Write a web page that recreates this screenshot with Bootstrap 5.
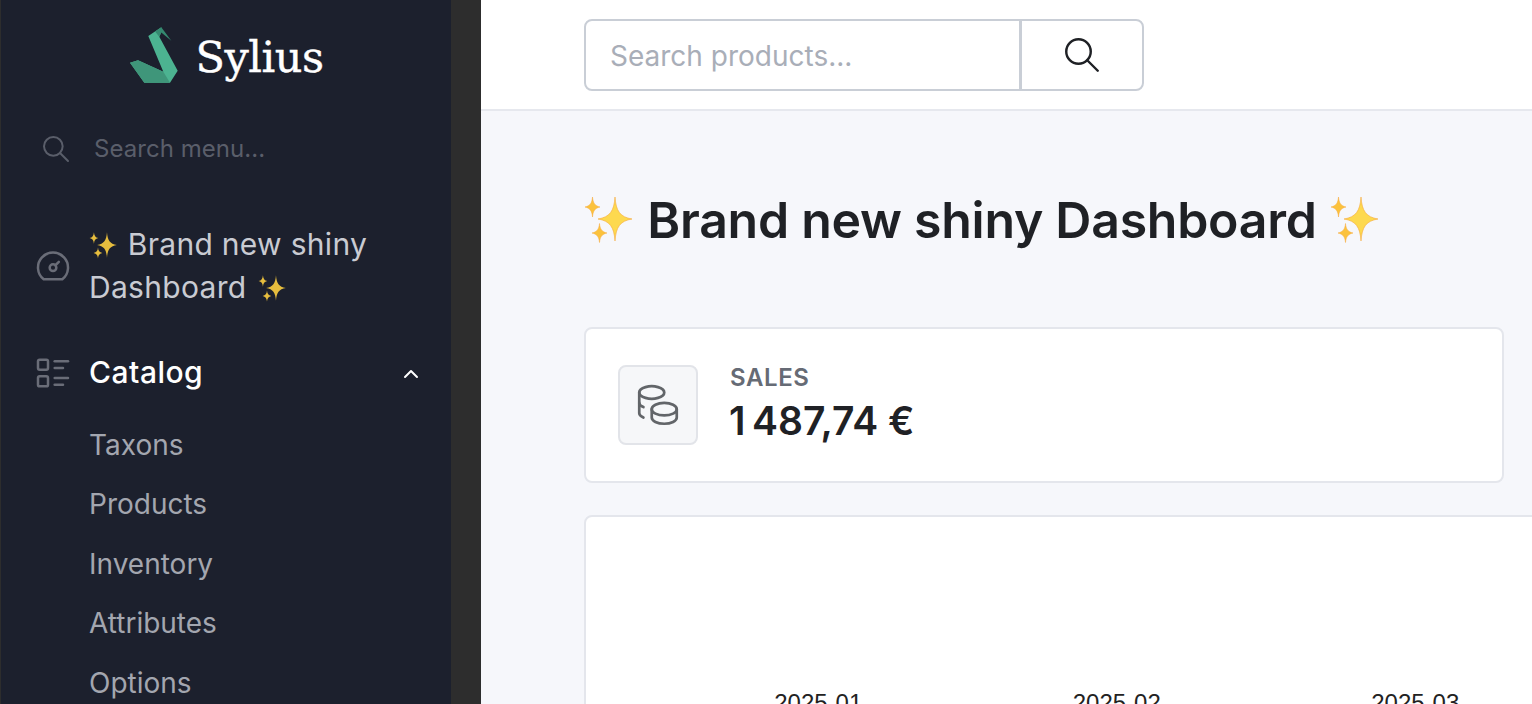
<!DOCTYPE html>
<html lang="en">
<head>
<meta charset="utf-8">
<title>Sylius Dashboard</title>
<link href="https://cdn.jsdelivr.net/npm/bootstrap@5.3.0/dist/css/bootstrap.min.css" rel="stylesheet">
<style>
html,body{height:100%;overflow:hidden}
body{font-family:Inter,"Liberation Sans",sans-serif;font-size:28px;background:#f6f7fb;color:#1f2125}
.shell{height:704px;overflow:hidden}
.side{width:481px;flex:none;background:#1c202d;border-left:1px solid #2d2d2d;border-right:30px solid #2d2d2d;overflow:hidden}
.brandline{height:112px;gap:17px;padding-left:2px}
.brandline svg{display:block;margin-top:-2px}
.brandword{font-family:"DejaVu Serif",serif;font-size:43px;line-height:1;color:#fff;letter-spacing:-.5px;-webkit-text-stroke:.4px #fff;margin-top:3px}
.menusearch{padding:0 0 0 39px;height:74px;gap:22px}
.menusearch input{background:transparent;border:0;outline:0;padding:0;color:#fff;font-size:24px;flex:1;min-width:0;letter-spacing:.05px}
.menusearch input::placeholder{color:#5a5e6a;opacity:1}
.menu{padding-top:37px}
.menulink{display:flex;align-items:center;padding:0 29px 0 32px;gap:16px;color:#c9cbd2;text-decoration:none;font-size:30px;line-height:43px;letter-spacing:.3px}
.menulink.group{color:#fff;font-weight:500;margin-top:42px;height:43px;letter-spacing:.5px}
.menulink svg.mi{flex:none;color:#6a6d78}
.chev{margin-top:3px;margin-right:-1px}
.spark{display:inline-block;vertical-align:-4px}
.spark.lead-spark{margin-right:1px}
.spark.tail-spark{margin-left:3px}
.spark .big,.spark .tiny{fill:#e6bd3e}
.subm{list-style:none;padding:0 0 0 89px;margin:22px 0 0 -1px}
.subm a{display:block;color:#a3a6af;text-decoration:none;height:59.4px;line-height:59.4px}
.topstrip{height:111px;background:#fff;border-bottom:2px solid #e6e8ee;padding-left:103px;padding-top:19px}
.searchgrp{width:560px;height:72px}
.searchgrp .form-control{height:72px;font-size:28px;padding:2px 24px 0;border:2px solid #c9ced6;border-radius:8px 0 0 8px;color:#1f2125}
.searchgrp .form-control::placeholder{color:#a9aeb8}
.searchgrp.input-group > .btn{width:124px;height:72px;padding:0;border:2px solid #c9ced6;border-radius:0 8px 8px 0;margin-left:-2px;background:#fff;color:#1f2125}
.content{padding:0 28px 0 103px;min-width:0}
.pagetitle{font-size:50px;font-weight:600;line-height:60px;margin:79px 0 77px;letter-spacing:-.27px;white-space:nowrap}
.pagetitle .spark{vertical-align:-5px}
.pagetitle .spark .big{fill:#fdd94f;stroke:#f7a93b;stroke-width:.6}
.pagetitle .spark .tiny{fill:#fbc23c;stroke:#f7a93b;stroke-width:.5}
.pagetitle .lead-spark{margin-right:1px}
.pagetitle .tail-spark{margin-left:1px}
.statcard{height:156px;border:2px solid #e4e6ec;border-radius:8px;background:#fff}
.stattile{width:80px;height:80px;background:#f6f7f9;border:2px solid #e2e4e9;border-radius:8px;color:#626569}
.statbody{padding:0 0 0 32px}
.statlabel{font-size:24px;font-weight:600;color:#666b75;line-height:28px;letter-spacing:.6px}
.statvalue{font-size:39px;font-weight:600;line-height:50px;color:#1f2125;margin:4px 0 0 -1px;letter-spacing:-.4px}
.chartcard{width:1000px;height:240px;margin-top:32px;border:2px solid #e4e6ec;border-radius:8px;background:#fff}
.axisline{padding:172px 0 0 83px;font-family:"Liberation Sans",sans-serif;font-size:24px;line-height:28px;color:#222}
.axisline span{width:298.5px;text-align:center;flex:none}
</style>
</head>
<body>
<div class="shell d-flex">
  <aside class="side">
    <div class="brandline d-flex align-items-center justify-content-center">
      <svg width="48" height="56" viewBox="130 27 48 56" aria-label="Sylius logo">
        <polygon fill="#4cb391" points="161.3,27.3 148.3,36 163.3,71.7 138,60.3 130,62.7 144.3,82.7 170,82.7 177.7,70.7 159.3,36.7 161.3,32"/>
        <polygon fill="#358a70" points="161.3,27.3 171.3,40.7 161.3,32.500 159.300,36.700 155,31.500"/>
        <polygon fill="#3f967a" points="130,62.7 138,60.3 163.3,71.7 170,82.7 144.3,82.7"/>
      </svg>
      <span class="brandword">Sylius</span>
    </div>
    <div class="menusearch d-flex align-items-center">
      <svg width="32" height="32" viewBox="0 0 24 24" fill="none" stroke="#5a5e6a" stroke-width="1.5" stroke-linecap="round" stroke-linejoin="round"><path d="M3 10a7 7 0 1 0 14 0a7 7 0 1 0-14 0"/><path d="M21 21l-6-6"/></svg>
      <input type="text" placeholder="Search menu..." aria-label="Search menu">
    </div>
    <nav class="menu">
      <a class="menulink" href="#">
        <svg class="mi" width="40" height="40" viewBox="0 0 24 24" fill="none" stroke="currentColor" stroke-width="1.5" stroke-linecap="round" stroke-linejoin="round"><path d="M10 13a2 2 0 1 0 4 0a2 2 0 1 0-4 0"/><path d="M13.45 11.55l2.05-2.05"/><path d="M6.4 20a9 9 0 1 1 11.2 0z"/></svg>
        <span class="flex-grow-1"><svg class="spark lead-spark" width="29" height="27" viewBox="0 0 50 46"><path class="big" d="M31 0C32 14 36 20 48 22C36 24 32 30 31 44C30 30 26 24 14 22C26 20 30 14 31 0z"/><path class="tiny" d="M8.500 0C9 6 11 9 16 10C11 11 9 14 8.500 20C8 14 6 11 1 10C6 9 8 6 8.500 0z"/><path class="tiny" d="M15.500 26.500C16 32 18 35 23 36C18 37 16 40 15.500 45.500C15 40 13 37 8 36C13 35 15 32 15.500 26.500z"/></svg> Brand new shiny Dashboard <svg class="spark tail-spark" width="29" height="27" viewBox="0 0 50 46"><path class="big" d="M31 0C32 14 36 20 48 22C36 24 32 30 31 44C30 30 26 24 14 22C26 20 30 14 31 0z"/><path class="tiny" d="M8.500 0C9 6 11 9 16 10C11 11 9 14 8.500 20C8 14 6 11 1 10C6 9 8 6 8.500 0z"/><path class="tiny" d="M15.500 26.500C16 32 18 35 23 36C18 37 16 40 15.500 45.500C15 40 13 37 8 36C13 35 15 32 15.500 26.500z"/></svg></span>
      </a>
      <a class="menulink group" href="#">
        <svg class="mi" width="40" height="40" viewBox="0 0 24 24" fill="none" stroke="currentColor" stroke-width="1.5" stroke-linecap="round" stroke-linejoin="round"><path d="M13 5h8"/><path d="M13 9h5"/><path d="M13 15h8"/><path d="M13 19h5"/><path d="M3 5a1 1 0 0 1 1-1h4a1 1 0 0 1 1 1v4a1 1 0 0 1-1 1h-4a1 1 0 0 1-1-1z"/><path d="M3 15a1 1 0 0 1 1-1h4a1 1 0 0 1 1 1v4a1 1 0 0 1-1 1h-4a1 1 0 0 1-1-1z"/></svg>
        <span class="flex-grow-1">Catalog</span>
        <svg class="chev" width="24" height="24" viewBox="0 0 24 24" fill="none" stroke="#fff" stroke-width="2" stroke-linecap="round" stroke-linejoin="round"><path d="M6 15l6-6l6 6"/></svg>
      </a>
      <ul class="subm">
        <li><a href="#">Taxons</a></li>
        <li><a href="#">Products</a></li>
        <li><a href="#">Inventory</a></li>
        <li><a href="#">Attributes</a></li>
        <li><a href="#">Options</a></li>
      </ul>
    </nav>
  </aside>
  <div class="flex-grow-1 overflow-hidden">
    <header class="topstrip">
      <form class="input-group searchgrp flex-nowrap" onsubmit="return false">
        <input class="form-control" type="text" placeholder="Search products..." aria-label="Search products">
        <button class="btn d-flex align-items-center justify-content-center" type="button" aria-label="Search">
          <svg width="42" height="42" viewBox="0 0 24 24" fill="none" stroke="currentColor" stroke-width="1.4" stroke-linecap="round" stroke-linejoin="round"><path d="M3 10a7 7 0 1 0 14 0a7 7 0 1 0-14 0"/><path d="M21 21l-6-6"/></svg>
        </button>
      </form>
    </header>
    <main class="content">
      <h1 class="pagetitle"><svg class="spark lead-spark" width="50" height="46" viewBox="0 0 50 46"><path class="big" d="M31 0C32 14 36 20 48 22C36 24 32 30 31 44C30 30 26 24 14 22C26 20 30 14 31 0z"/><path class="tiny" d="M8.500 0C9 6 11 9 16 10C11 11 9 14 8.500 20C8 14 6 11 1 10C6 9 8 6 8.500 0z"/><path class="tiny" d="M15.500 26.500C16 32 18 35 23 36C18 37 16 40 15.500 45.500C15 40 13 37 8 36C13 35 15 32 15.500 26.500z"/></svg> Brand new shiny Dashboard <svg class="spark tail-spark" width="50" height="46" viewBox="0 0 50 46"><path class="big" d="M31 0C32 14 36 20 48 22C36 24 32 30 31 44C30 30 26 24 14 22C26 20 30 14 31 0z"/><path class="tiny" d="M8.500 0C9 6 11 9 16 10C11 11 9 14 8.500 20C8 14 6 11 1 10C6 9 8 6 8.500 0z"/><path class="tiny" d="M15.500 26.500C16 32 18 35 23 36C18 37 16 40 15.500 45.500C15 40 13 37 8 36C13 35 15 32 15.500 26.500z"/></svg></h1>
      <section class="statcard d-flex align-items-center">
        <div class="d-flex align-items-center ms-2 ps-4">
          <div class="stattile d-flex align-items-center justify-content-center">
            <svg width="50" height="50" viewBox="0 0 24 24" fill="none" stroke="currentColor" stroke-width="1.3" stroke-linecap="round" stroke-linejoin="round"><path d="M9 14c0 1.657 2.686 3 6 3s6-1.343 6-3s-2.686-3-6-3s-6 1.343-6 3z"/><path d="M9 14v4c0 1.656 2.686 3 6 3s6-1.344 6-3v-4"/><path d="M3 6c0 1.072 1.144 2.062 3 2.598s4.144.536 6 0c1.856-.536 3-1.526 3-2.598c0-1.072-1.144-2.062-3-2.598s-4.144-.536-6 0c-1.856.536-3 1.526-3 2.598z"/><path d="M3 6v10c0 .888.772 1.450 2 2"/><path d="M3 11c0 .888.772 1.450 2 2"/></svg>
          </div>
          <div class="statbody">
            <div class="statlabel">SALES</div>
            <div class="statvalue">1&#8239;487,74 €</div>
          </div>
        </div>
      </section>
      <section class="chartcard">
        <div class="axisline d-flex">
          <span>2025-01</span><span>2025-02</span><span>2025-03</span>
        </div>
      </section>
    </main>
  </div>
</div>
<script src="https://cdn.jsdelivr.net/npm/bootstrap@5.3.0/dist/js/bootstrap.bundle.min.js"></script>
</body>
</html>
